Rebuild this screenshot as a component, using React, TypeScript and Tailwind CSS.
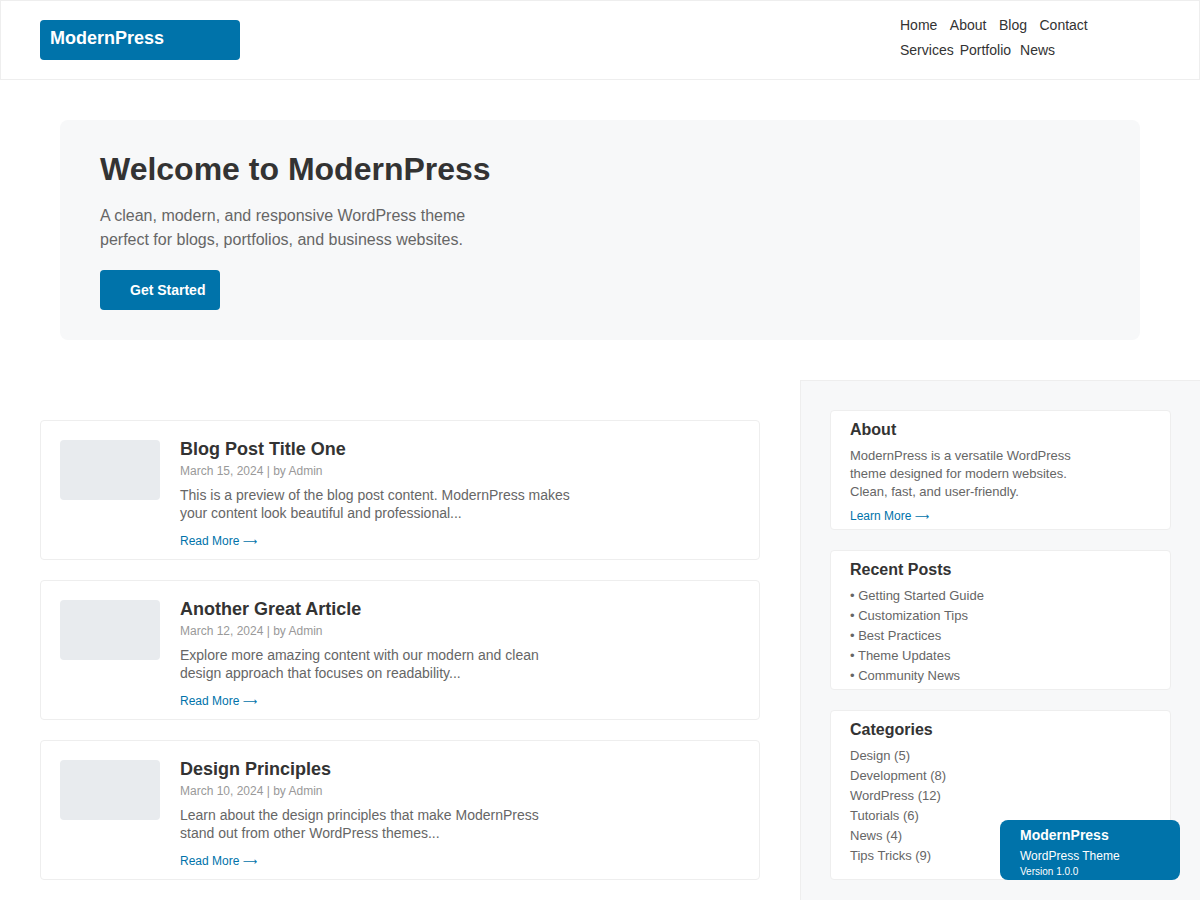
import React from 'react'

const posts = [
  {
    title: 'Blog Post Title One',
    meta: 'March 15, 2024 | by Admin',
    excerpt: 'This is a preview of the blog post content. ModernPress makes your content look beautiful and professional...',
  },
  {
    title: 'Another Great Article',
    meta: 'March 12, 2024 | by Admin',
    excerpt: 'Explore more amazing content with our modern and clean design approach that focuses on readability...',
  },
  {
    title: 'Design Principles',
    meta: 'March 10, 2024 | by Admin',
    excerpt: 'Learn about the design principles that make ModernPress stand out from other WordPress themes...',
  },
]

const recent = ['Getting Started Guide', 'Customization Tips', 'Best Practices', 'Theme Updates', 'Community News']

const categories = ['Design (5)', 'Development (8)', 'WordPress (12)', 'Tutorials (6)', 'News (4)', 'Tips Tricks (9)']

function Arrow() {
  return <span className="font-['DejaVu_Sans',sans-serif] text-[10px]">⟶</span>
}

function Header() {
  return (
    <header className="h-[80px] border border-[#eeeeee] bg-white flex items-start justify-between px-[39px]">
      {/* 로고 */}
      <div className="mt-[19px] w-[200px] h-[40px] bg-[#0073aa] rounded-[4px] flex items-start pt-[9px] px-[10px]">
        <span className="text-white text-[18px] font-bold leading-[18px]">ModernPress</span>
      </div>

      {/* 메뉴 */}
      <nav className="mt-[12px] w-[260px] text-[14px] text-[#333333]">
        <div className="flex h-[25px] items-center gap-[12.5px]">
          <a>Home</a>
          <a>About</a>
          <a>Blog</a>
          <a>Contact</a>
        </div>
        <div className="flex h-[25px] items-center">
          <a>Services</a>
          <a className="ml-[6px]">Portfolio</a>
          <a className="ml-[9px]">News</a>
        </div>
      </nav>
    </header>
  )
}

function Hero() {
  return (
    <section className="mx-[60px] mt-[40px] bg-[#f7f8f9] rounded-[8px] px-[40px] pt-[30px] pb-[30px]">
      <h1 className="text-[32px] font-bold leading-[1.2] text-[#333333]">Welcome to ModernPress</h1>
      <p className="mt-[16px] max-w-[400px] text-[16px] leading-[24px] text-[#666666]">
        A clean, modern, and responsive WordPress theme perfect for blogs, portfolios, and business websites.
      </p>
      <button className="mt-[18px] w-[120px] h-[40px] bg-[#0073aa] rounded-[4px] text-left pl-[30px] text-white text-[14px] font-bold">
        Get Started
      </button>
    </section>
  )
}

function PostCard({ title, meta, excerpt }: { title: string; meta: string; excerpt: string }) {
  return (
    <article className="h-[140px] border border-[#eeeeee] rounded-[4px] bg-white p-[19px] flex gap-[20px]">
      <div className="w-[100px] h-[60px] shrink-0 bg-[#e8ebee] rounded-[4px]" />
      <div>
        <h2 className="text-[18px] leading-[18px] font-bold text-[#333333]">{title}</h2>
        <p className="mt-[6px] text-[12px] leading-[14px] text-[#999999]">{meta}</p>
        <p className="mt-[8px] max-w-[395px] text-[14px] leading-[18px] text-[#666666]">{excerpt}</p>
        <a className="block mt-[12px] text-[12px] leading-[14px] text-[#0073aa]">
          Read More <Arrow />
        </a>
      </div>
    </article>
  )
}

function Widget({ title, height, children }: { title: string; height: string; children: React.ReactNode }) {
  return (
    <div className={`${height} bg-white border border-[#eeeeee] rounded-[4px] px-[19px] pt-[9px]`}>
      <h3 className="text-[16px] leading-[20px] font-bold text-[#333333]">{title}</h3>
      {children}
    </div>
  )
}

function Sidebar() {
  return (
    <aside className="w-[400px] shrink-0 bg-[#f7f8f9] border border-[#eeeeee] border-r-0 px-[29px] pt-[29px] pb-[40px] flex flex-col gap-[20px]">
      <Widget title="About" height="h-[120px]">
        <p className="mt-[7px] max-w-[240px] text-[13px] leading-[18px] text-[#666666]">
          ModernPress is a versatile WordPress theme designed for modern websites. Clean, fast, and user-friendly.
        </p>
        <a className="block mt-[7px] text-[12px] leading-[16px] text-[#0073aa]">
          Learn More <Arrow />
        </a>
      </Widget>

      <Widget title="Recent Posts" height="h-[140px]">
        <ul className="mt-[6px] text-[13px] leading-[20px] text-[#666666]">
          {recent.map((item) => (
            <li key={item}>• {item}</li>
          ))}
        </ul>
      </Widget>

      <Widget title="Categories" height="h-[170px]">
        <ul className="mt-[6px] text-[13px] leading-[20px] text-[#666666]">
          {categories.map((item) => (
            <li key={item}>{item}</li>
          ))}
        </ul>
      </Widget>
    </aside>
  )
}

export default function App() {
  return (
    <div className="min-h-screen bg-white font-['Liberation_Sans',Arial,sans-serif]">
      <Header />
      <Hero />

      {/* 본문 + 사이드바 */}
      <main className="mt-[40px] flex pl-[40px]">
        <div className="w-[720px] shrink-0 pt-[40px] flex flex-col gap-[20px]">
          {posts.map((post) => (
            <PostCard key={post.title} {...post} />
          ))}
        </div>
        <div className="ml-[40px]">
          <Sidebar />
        </div>
      </main>

      {/* 플로팅 배지 */}
      <div className="fixed right-[20px] bottom-[20px] w-[180px] h-[60px] bg-[#0073aa] rounded-[8px] px-[20px] pt-[7px] text-white">
        <div className="text-[14px] leading-[16px] font-bold">ModernPress</div>
        <div className="mt-[5px] text-[12px] leading-[16px]">WordPress Theme</div>
        <div className="mt-[1px] text-[10px] leading-[14px]">Version 1.0.0</div>
      </div>
    </div>
  )
}
